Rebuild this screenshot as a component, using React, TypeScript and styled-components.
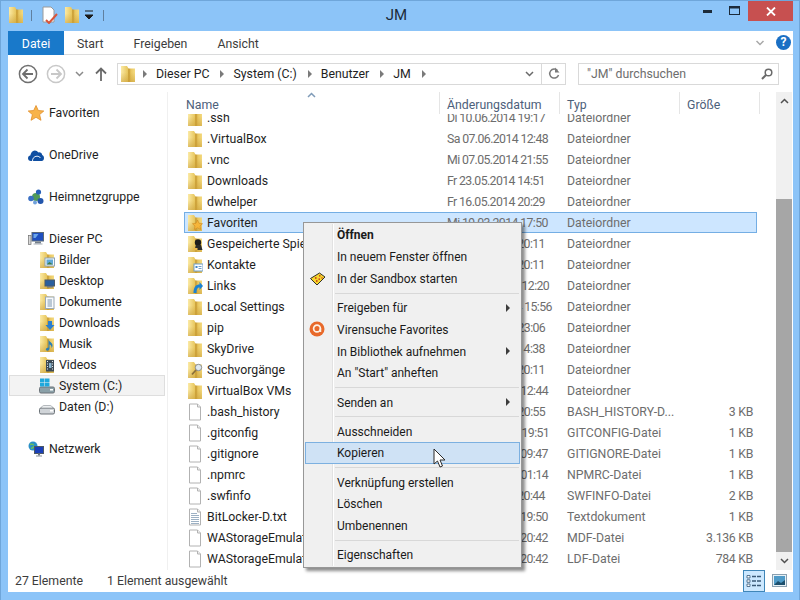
import styled, { createGlobalStyle } from "styled-components";

const GlobalStyle = createGlobalStyle`
    html, body {
        margin: 0;
        padding: 0;
        background: #8cc4f8;
    }
    * {
        box-sizing: border-box;
    }
`;

const Window = styled.div`
    position: relative;
    width: 800px;
    height: 600px;
    overflow: hidden;
    display: flex;
    flex-direction: column;
    padding: 0 6px 8px 7px;
    background: #8cc4f8;
    border: 1px solid #6fa6da;
    border-width: 1px 1px 0 1px;
    font-family: "Roboto", "Noto Sans", sans-serif;
    font-size: 12.3px;
    color: #1e1e1e;
`;

const TitleBar = styled.div`
    height: 30px;
    margin: 0 -6px 0 -7px;
    padding-left: 7px;
    display: flex;
    align-items: flex-start;
    position: relative;
`;

const QuickAccess = styled.div`
    display: flex;
    align-items: center;
    height: 28px;
`;

const QuickSep = styled.div<{ $left: number; $right: number }>`
    width: 1px;
    height: 11px;
    background: #5f7f9f;
    margin: 0 ${(p) => p.$right}px 0 ${(p) => p.$left}px;
`;

const QuickIcon = styled.div<{ $gap: number }>`
    display: flex;
    margin-right: ${(p) => p.$gap}px;
`;

const Title = styled.div`
    position: absolute;
    left: 0;
    right: 7px;
    top: 4px;
    text-align: center;
    font-size: 15px;
    line-height: 20px;
    color: #1c2b3a;
`;

const Controls = styled.div`
    margin-left: auto;
    display: flex;
    align-items: flex-start;
    margin-right: 6px;
`;

const ControlButton = styled.div<{ $close?: boolean; $w: number }>`
    width: ${(p) => p.$w}px;
    height: 20px;
    display: flex;
    align-items: center;
    justify-content: center;
    background: ${(p) => (p.$close ? "#c75050" : "transparent")};
`;

const Content = styled.div`
    flex: 1;
    min-height: 0;
    display: flex;
    flex-direction: column;
    background: #ffffff;
`;

const TabRow = styled.div`
    height: 24px;
    display: flex;
    align-items: stretch;
    border-bottom: 1px solid #dadbdc;
`;

const Tab = styled.div<{ $active?: boolean }>`
    padding: 2px 13px 0;
    width: ${(p) => (p.$active ? "56px" : "auto")};
    margin-right: ${(p) => (p.$active ? 0 : 4)}px;
    display: flex;
    align-items: center;
    justify-content: center;
    color: ${(p) => (p.$active ? "#ffffff" : "#3c3c3c")};
    background: ${(p) => (p.$active ? "#1979ca" : "transparent")};
    height: ${(p) => (p.$active ? 24 : 23)}px;
`;

const RibbonRight = styled.div`
    margin-left: auto;
    display: flex;
    align-items: center;
    gap: 11px;
    padding-right: 2px;
`;

const HelpBadge = styled.div`
    width: 15px;
    height: 15px;
    border-radius: 50%;
    background: #1a6fc4;
    color: #ffffff;
    font-size: 12px;
    font-weight: 700;
    line-height: 15px;
    text-align: center;
`;

const NavRow = styled.div`
    height: 37px;
    display: flex;
    align-items: center;
    padding-left: 10px;
`;

const NavButtons = styled.div`
    width: 99px;
    display: flex;
    align-items: center;
`;

const NavIcon = styled.div<{ $w: number }>`
    width: ${(p) => p.$w}px;
    display: flex;
    justify-content: center;
`;

const AddressBox = styled.div`
    width: 449px;
    height: 22px;
    border: 1px solid #d9d9d9;
    display: flex;
    align-items: center;
    padding-left: 2px;
`;

const Crumb = styled.span`
    color: #1e1e1e;
    margin: 0 11px 0 9px;
`;

const CrumbArrow = styled.span<{ $first?: boolean }>`
    width: 0;
    height: 0;
    border-left: 4px solid #7a7a7a;
    border-top: 4px solid transparent;
    border-bottom: 4px solid transparent;
    margin-left: ${(p) => (p.$first ? 7 : 0)}px;
`;

const AddressEnd = styled.div`
    margin-left: auto;
    display: flex;
    align-items: center;
    height: 100%;
`;

const AddressChevron = styled.div`
    width: 24px;
    display: flex;
    justify-content: center;
`;

const RefreshCell = styled.div`
    width: 24px;
    height: 100%;
    border-left: 1px solid #d9d9d9;
    display: flex;
    align-items: center;
    justify-content: center;
`;

const SearchBox = styled.div`
    width: 201px;
    height: 22px;
    margin-left: 12px;
    border: 1px solid #d9d9d9;
    display: flex;
    align-items: center;
    justify-content: space-between;
    padding: 0 5px 0 8px;
    color: #6d6d6d;
`;

const Body = styled.div`
    flex: 1;
    min-height: 0;
    display: flex;
`;

const NavPane = styled.div`
    width: 160px;
    padding: 10px 2px 0 1px;
    border-right: 1px solid #f0f0f0;
`;

const NavItem = styled.div<{ $sub?: boolean; $top?: boolean; $current?: boolean }>`
    height: 21px;
    margin-top: ${(p) => (p.$top ? 21 : 0)}px;
    padding-left: ${(p) => (p.$sub ? 30 : 19)}px;
    display: flex;
    align-items: center;
    gap: ${(p) => (p.$sub ? 4 : 5)}px;
    color: #1e1e1e;
    background: ${(p) => (p.$current ? "#f3f3f3" : "transparent")};
    box-shadow: ${(p) => (p.$current ? "inset 0 0 0 1px #dedede" : "none")};
`;

const ListPane = styled.div`
    flex: 1;
    min-width: 0;
    display: flex;
    flex-direction: column;
    padding-left: 16px;
`;

const HeaderRow = styled.div`
    height: 22px;
    display: grid;
    grid-template-columns: 256px 120px 120px 80px;
    position: relative;
`;

const HeaderCell = styled.div`
    padding: 5px 0 0 2px;
    line-height: 16px;
    color: #4c607a;
    border-right: 1px solid #e5e5e5;
    & + & {
        padding-left: 7px;
    }
`;

const SortMark = styled.div`
    position: absolute;
    left: 123px;
    top: 0;
    display: flex;
`;

const RowClip = styled.div`
    flex: 1;
    min-height: 0;
    overflow: hidden;
`;

const RowStack = styled.div`
    margin-top: -7px;
`;

const Row = styled.div<{ $selected?: boolean }>`
    height: 21px;
    width: 573px;
    display: grid;
    grid-template-columns: 256px 120px 114px 79px;
    align-items: center;
    background: ${(p) => (p.$selected ? "#cde6ff" : "transparent")};
    box-shadow: ${(p) => (p.$selected ? "inset 0 0 0 1px #74aee4" : "none")};
`;

const NameCell = styled.div`
    display: flex;
    align-items: center;
    gap: 4px;
    padding-left: 3px;
    white-space: nowrap;
    overflow: hidden;
`;

const MutedCell = styled.div`
    padding-left: 7px;
    color: #6d6d6d;
    white-space: nowrap;
    overflow: hidden;
`;

const DateCell = styled(MutedCell)`
    letter-spacing: -0.6px;
`;

const SizeCell = styled.div`
    text-align: right;
    color: #6d6d6d;
    letter-spacing: -0.3px;
`;

const ScrollTrack = styled.div`
    width: 16px;
    margin-right: 1px;
    margin-left: 19px;
    display: flex;
    flex-direction: column;
    background: #f0f0f0;
`;

const ScrollEnd = styled.div`
    height: 18px;
    display: flex;
    align-items: center;
    justify-content: center;
`;

const ScrollGap = styled.div`
    height: 89px;
`;

const ScrollThumb = styled.div`
    flex: 1;
    background: #a6a6a6;
`;

const StatusBar = styled.div`
    height: 22px;
    display: flex;
    align-items: center;
    padding: 0 0 1px 7px;
    color: #3c3c3c;
`;

const StatusCount = styled.div`
    width: 92px;
`;

const ViewSwitch = styled.div`
    margin-left: auto;
    margin-right: 3px;
    display: flex;
    align-items: center;
    gap: 3px;
`;

const ViewButton = styled.div<{ $active?: boolean }>`
    width: 22px;
    height: 22px;
    display: flex;
    align-items: center;
    justify-content: center;
    background: ${(p) => (p.$active ? "#cce8ff" : "transparent")};
    box-shadow: ${(p) => (p.$active ? "inset 0 0 0 1px #3f86b8" : "none")};
`;

const Menu = styled.div`
    position: absolute;
    left: 302px;
    top: 221px;
    width: 219px;
    padding: 1px;
    background: #f0f0f0;
    border: 1px solid #979797;
    box-shadow: 3px 3px 3px rgba(0, 0, 0, 0.45);
    font-size: 12px;
`;

const MenuRail = styled.div`
    position: absolute;
    left: 28px;
    top: 1px;
    bottom: 1px;
    width: 2px;
    background: #e2e2e2;
    border-right: 1px solid #ffffff;
`;

const MenuEntry = styled.div<{ $hot?: boolean; $bold?: boolean }>`
    position: relative;
    height: 21.8px;
    display: flex;
    align-items: center;
    padding: 1px 0 0 32px;
    font-weight: ${(p) => (p.$bold ? 700 : 400)};
    color: #1a1a1a;
    background: ${(p) => (p.$hot ? "#cfe2f5" : "transparent")};
    box-shadow: ${(p) => (p.$hot ? "inset 0 0 0 1px #7cb0e0" : "none")};
`;

const MenuIcon = styled.div`
    position: absolute;
    left: 4px;
    top: 3px;
    display: flex;
`;

const MenuArrow = styled.div`
    position: absolute;
    right: 10px;
    top: 7px;
    width: 0;
    height: 0;
    border-left: 4px solid #3c3c3c;
    border-top: 4px solid transparent;
    border-bottom: 4px solid transparent;
`;

const MenuSeparator = styled.div`
    height: 7.3px;
    display: flex;
    align-items: center;
    padding-left: 30px;
    padding-right: 1px;
    &::after {
        content: "";
        flex: 1;
        height: 1px;
        background: #d8d8d8;
    }
`;

const Pointer = styled.svg`
    position: absolute;
    left: 432px;
    top: 447px;
`;

type Overlay = "star" | "game" | "contact" | "link" | "search" | "picture" | "desktop" | "doc" | "down" | "music" | "video";

function OverlayMark({ kind }: { kind: Overlay }) {
    switch (kind) {
        case "star":
            return <polygon points="10.5,6 12,9.3 15.5,9.7 13,12 13.7,15.5 10.5,13.8 7.3,15.5 8,12 5.5,9.7 9,9.3" fill="#f5b53a" stroke="#d08a20" strokeWidth="0.6" />;
        case "game":
            return (
                <>
                    <circle cx="11" cy="7.5" r="3.2" fill="#1c1c1c" />
                    <path d="M9 10h5l1.5 5h-8z" fill="#2a2a2a" />
                    <rect x="6.5" y="13" width="4" height="2" fill="#e9b54a" />
                </>
            );
        case "contact":
            return (
                <>
                    <rect x="7" y="8" width="9" height="7" fill="#ffffff" stroke="#6f9fc8" />
                    <rect x="8.5" y="10" width="2" height="2" fill="#3f86c8" />
                    <path d="M11.5 10.5h3M11.5 12.5h3" stroke="#6f9fc8" />
                </>
            );
        case "link":
            return <path d="M6.5 16c0-6 2.5-8.5 6-8.5V5l3.5 4-3.5 4v-2.5c-2 0-3 1.5-3 5.5z" fill="#1b82d2" />;
        case "search":
            return (
                <>
                    <circle cx="11.5" cy="6.5" r="3.2" fill="#dfe8ee" stroke="#8a8f94" />
                    <path d="M9 9l-4 4.5" stroke="#8a6f3a" strokeWidth="1.8" />
                </>
            );
        case "picture":
            return (
                <>
                    <rect x="6" y="7" width="9.5" height="8" fill="#f4f8fb" stroke="#8ea3b5" />
                    <rect x="7.5" y="8.5" width="6.5" height="5" fill="#5fa8d8" />
                    <path d="M7.5 13.5l3-2.5 3.5 2.5z" fill="#3f7a4a" />
                </>
            );
        case "desktop":
            return (
                <>
                    <rect x="6" y="8" width="9.5" height="6" fill="#2a5f9e" stroke="#4b5a6a" />
                    <rect x="8" y="14" width="6" height="1.5" fill="#6a7480" />
                </>
            );
        case "doc":
            return (
                <>
                    <rect x="6.5" y="4" width="8.5" height="11.5" fill="#f8fafc" stroke="#9aa8b5" />
                    <path d="M8.5 7h4.5M8.5 9h4.5M8.5 11h4.5M8.5 13h4.5" stroke="#7d97b0" />
                </>
            );
        case "down":
            return <path d="M9 7h4v4h2.5L11 16l-4.5-5H9z" fill="#2a7fd0" />;
        case "music":
            return <path d="M9.5 4c0 3 4 3 4 6.5 0 1.2-.5 2-1 2.5.3-2-1.2-3.5-2-3.5v4c0 1.5-1.5 2.5-3 2-1.2-.5-.7-2.5 1-2.8l1-.2z" fill="#2a7fb8" />;
        case "video":
            return (
                <>
                    <rect x="7" y="4" width="8" height="11.5" fill="#3c4a55" />
                    <path d="M8 5.5h1M8 8h1M8 10.5h1M8 13h1M13 5.5h1M13 8h1M13 10.5h1M13 13h1" stroke="#e4e8ec" />
                    <rect x="10" y="7" width="2.5" height="5" fill="#8ab4d0" />
                </>
            );
    }
}

function FolderIcon({ overlay }: { overlay?: Overlay }) {
    return (
        <svg width="16" height="18" viewBox="0 0 16 18">
            <defs>
                <linearGradient id="folderFace" x1="0" x2="1" y1="0" y2="0">
                    <stop offset="0" stopColor="#fbeaa6" />
                    <stop offset="0.48" stopColor="#e8c75f" />
                    <stop offset="0.56" stopColor="#c4962e" />
                    <stop offset="0.7" stopColor="#e8c660" />
                    <stop offset="1" stopColor="#f4da80" />
                </linearGradient>
                <linearGradient id="folderShade" x1="0" x2="0" y1="0" y2="1">
                    <stop offset="0.4" stopColor="#c99d35" stopOpacity="0" />
                    <stop offset="1" stopColor="#c99d35" stopOpacity="0.55" />
                </linearGradient>
            </defs>
            <path d="M1 1h6l1.5 2.5H15v13.5H1z" fill="url(#folderFace)" />
            <path d="M1 1h6l1.5 2.5H15v13.500H1z" fill="url(#folderShade)" />
            {overlay && <OverlayMark kind={overlay} />}
        </svg>
    );
}

function FileIcon({ lines }: { lines?: boolean }) {
    return (
        <svg width="16" height="18" viewBox="0 0 16 18">
            <path d="M2.5 1h8l3 3v13h-11z" fill="#ffffff" stroke="#b2b2b2" />
            <path d="M10.5 1v3h3" fill="#f0f0f0" stroke="#b2b2b2" />
            {lines && <path d="M4 5.5h6M4 7.5h8M4 9.5h8M4 11.5h8M4 13.5h8M4 15.5h8" stroke="#9db1c4" />}
        </svg>
    );
}

function StarIcon() {
    return (
        <svg width="16" height="16" viewBox="0 0 16 16">
            <polygon points="8,0.5 10.3,5.5 15.8,6 11.6,9.6 13,15.3 8,12.3 3,15.3 4.4,9.6 0.2,6 5.7,5.5" fill="#f8b34a" stroke="#e08e2a" strokeWidth="0.8" />
        </svg>
    );
}

function CloudIcon() {
    return (
        <svg width="16" height="16" viewBox="0 0 16 16">
            <path d="M3 14c-2 0-3-1.300-3-2.800 0-1.500 1-2.600 2.300-2.700C2.800 6 4.300 3.500 6.800 3.500c1.600 0 2.800.8 3.500 2 2-.6 3.600.7 3.900 2.500 1 .3 1.800 1.500 1.800 2.900 0 1.700-1 3.100-2.300 3.100z" fill="#0f4ea1" />
            <path d="M4.500 14c0-2.500 1.500-4.800 4.500-4.800 1.500 0 2.800.7 3.500 1.800" fill="none" stroke="#ffffff" strokeWidth="0.9" />
        </svg>
    );
}

function HomegroupIcon() {
    return (
        <svg width="16" height="16" viewBox="0 0 16 16">
            <circle cx="8" cy="8" r="4" fill="#4f9a58" />
            <circle cx="10.5" cy="3" r="2.6" fill="#2660b8" />
            <circle cx="3" cy="9.5" r="2.8" fill="#3a70c4" />
            <circle cx="12.5" cy="12" r="3" fill="#2356ac" />
            <circle cx="7" cy="13.5" r="2" fill="#6fa0dc" />
        </svg>
    );
}

function ComputerIcon() {
    return (
        <svg width="16" height="16" viewBox="0 0 16 16">
            <rect x="0.5" y="4.5" width="2.5" height="9" fill="#d8d8d8" stroke="#6f6f6f" strokeWidth="0.7" />
            <rect x="4" y="1.5" width="11.5" height="8.5" fill="#1f4fc0" stroke="#5a6a78" />
            <path d="M5.5 3h5l-3 4h-2z" fill="#6ba6ea" />
            <rect x="7" y="10.5" width="6" height="2" fill="#76808a" />
            <rect x="5.5" y="12.5" width="9" height="1" fill="#a5adb5" />
        </svg>
    );
}

function DriveIcon({ system }: { system?: boolean }) {
    return (
        <svg width="16" height="16" viewBox="0 0 16 16">
            <rect x="0.5" y="9" width="15" height="6" rx="1.5" fill={system ? "#8aa0a8" : "#d0d4d8"} stroke="#6c7378" />
            <rect x="11" y="11" width="3" height="1.5" fill="#ffffff" />
            {system ? (
                <>
                    <rect x="1" y="0.5" width="4.5" height="4" fill="#1fa8dc" />
                    <rect x="6" y="0.5" width="4.5" height="4" fill="#1fa8dc" />
                    <rect x="1" y="5" width="4.5" height="3.5" fill="#1fa8dc" />
                    <rect x="6" y="5" width="4.5" height="3.5" fill="#1fa8dc" />
                </>
            ) : (
                <path d="M2 9c1-2 2-2.5 3-2.5h6c1 0 2 .5 3 2.5z" fill="#eceef0" stroke="#8a9096" strokeWidth="0.6" />
            )}
        </svg>
    );
}

function NetworkIcon() {
    return (
        <svg width="16" height="16" viewBox="0 0 16 16">
            <circle cx="5" cy="5" r="4.5" fill="#2a90c8" />
            <path d="M2 3.5c2-1 3 .5 4 0M3.5 8c0-2 3-1.5 3-3" fill="none" stroke="#6fbf5a" strokeWidth="1.4" />
            <rect x="6.5" y="5.5" width="9" height="7" fill="#1a3fb8" stroke="#4c5866" />
            <rect x="10" y="12.5" width="2" height="2" fill="#6a7480" />
            <rect x="8" y="14.5" width="6" height="1" fill="#8a929a" />
        </svg>
    );
}

function NavCircle({ muted, flip }: { muted?: boolean; flip?: boolean }) {
    const tone = muted ? "#c8c8c8" : "#6f6f6f";
    return (
        <svg width="20" height="20" viewBox="0 0 20 20" style={{ transform: flip ? "scaleX(-1)" : undefined }}>
            <circle cx="10" cy="10" r="8.6" fill="#ffffff" stroke={tone} strokeWidth="1.5" />
            <path d="M5 10h10M9.5 5.5L5 10l4.5 4.5" fill="none" stroke={tone} strokeWidth="1.8" />
        </svg>
    );
}

function TinyChevron({ up, color = "#7a7a7a", w = 9 }: { up?: boolean; color?: string; w?: number }) {
    return (
        <svg width={w} height="6" viewBox="0 0 9 6">
            <path d={up ? "M1 5l3.5-3.5L8 5" : "M1 1l3.5 3.5L8 1"} fill="none" stroke={color} strokeWidth="1.5" />
        </svg>
    );
}

function QuickDoc() {
    return (
        <svg width="16" height="18" viewBox="0 0 16 18">
            <path d="M1 1h8l3 3v12H1z" fill="#ffffff" stroke="#9a9a9a" />
            <path d="M4 14l3 3 8-9" fill="none" stroke="#d8553a" strokeWidth="2" />
        </svg>
    );
}

function SandboxIcon() {
    return (
        <svg width="18" height="16" viewBox="0 0 18 16">
            <path d="M1.5 7.500L10.500 2l5.500 4-8 8z" fill="#f7d62e" stroke="#1c1c1c" strokeWidth="0.9" />
            <path d="M6 7h1.500M10 4.800h1.500M9.500 8.200h1.500M12.500 7h1M7 10h1.500" stroke="#c02a1a" strokeWidth="1.300" />
        </svg>
    );
}

function AvastIcon() {
    return (
        <svg width="16" height="16" viewBox="0 0 16 16">
            <circle cx="8" cy="8" r="7.5" fill="#e8692a" />
            <circle cx="8" cy="7.5" r="3.4" fill="#e8692a" stroke="#fdf2e6" strokeWidth="1.700" />
            <path d="M11.400 7.500v3.500" stroke="#fdf2e6" strokeWidth="1.700" />
        </svg>
    );
}

type FileRow = { name: string; date: string; type: string; size?: string; icon: "folder" | "file" | "text"; overlay?: Overlay; selected?: boolean };

const rows: FileRow[] = [
    { name: ".ssh", date: "Di 10.06.2014 19:17", type: "Dateiordner", icon: "folder" },
    { name: ".VirtualBox", date: "Sa 07.06.2014 12:48", type: "Dateiordner", icon: "folder" },
    { name: ".vnc", date: "Mi 07.05.2014 21:55", type: "Dateiordner", icon: "folder" },
    { name: "Downloads", date: "Fr 23.05.2014 14:51", type: "Dateiordner", icon: "folder" },
    { name: "dwhelper", date: "Fr 16.05.2014 20:29", type: "Dateiordner", icon: "folder" },
    { name: "Favoriten", date: "Mi 19.03.2014 17:50", type: "Dateiordner", icon: "folder", overlay: "star", selected: true },
    { name: "Gespeicherte Spiele", date: "Fr 21.03.2014 20:11", type: "Dateiordner", icon: "folder", overlay: "game" },
    { name: "Kontakte", date: "Fr 21.03.2014 20:11", type: "Dateiordner", icon: "folder", overlay: "contact" },
    { name: "Links", date: "Do 05.06.2014 12:20", type: "Dateiordner", icon: "folder", overlay: "link" },
    { name: "Local Settings", date: "Mo 09.06.2014 15:56", type: "Dateiordner", icon: "folder" },
    { name: "pip", date: "Di 20.05.2014 23:06", type: "Dateiordner", icon: "folder" },
    { name: "SkyDrive", date: "Fr 04.04.2014 14:38", type: "Dateiordner", icon: "folder" },
    { name: "Suchvorgänge", date: "Fr 21.03.2014 20:11", type: "Dateiordner", icon: "folder", overlay: "search" },
    { name: "VirtualBox VMs", date: "Sa 07.06.2014 12:44", type: "Dateiordner", icon: "folder" },
    { name: ".bash_history", date: "Di 10.06.2014 20:55", type: "BASH_HISTORY-D...", size: "3 KB", icon: "file" },
    { name: ".gitconfig", date: "Do 22.05.2014 19:51", type: "GITCONFIG-Datei", size: "1 KB", icon: "file" },
    { name: ".gitignore", date: "Mi 21.05.2014 09:47", type: "GITIGNORE-Datei", size: "1 KB", icon: "file" },
    { name: ".npmrc", date: "Sa 17.05.2014 01:14", type: "NPMRC-Datei", size: "1 KB", icon: "file" },
    { name: ".swfinfo", date: "Fr 16.05.2014 20:44", type: "SWFINFO-Datei", size: "2 KB", icon: "file" },
    { name: "BitLocker-D.txt", date: "Mi 19.03.2014 19:50", type: "Textdokument", size: "1 KB", icon: "text" },
    { name: "WAStorageEmulatorDb34.mdf", date: "Mi 14.05.2014 20:42", type: "MDF-Datei", size: "3.136 KB", icon: "file" },
    { name: "WAStorageEmulatorDb34_log.ldf", date: "Mi 14.05.2014 20:42", type: "LDF-Datei", size: "784 KB", icon: "file" },
];

const libraries: { label: string; overlay: Overlay }[] = [
    { label: "Bilder", overlay: "picture" },
    { label: "Desktop", overlay: "desktop" },
    { label: "Dokumente", overlay: "doc" },
    { label: "Downloads", overlay: "down" },
    { label: "Musik", overlay: "music" },
    { label: "Videos", overlay: "video" },
];

type MenuLine =
    | { sep: true }
    | { sep?: false; label: string; bold?: boolean; arrow?: boolean; hot?: boolean; icon?: "sandbox" | "avast" };

const menuLines: MenuLine[] = [
    { label: "Öffnen", bold: true },
    { label: "In neuem Fenster öffnen" },
    { label: "In der Sandbox starten", icon: "sandbox" },
    { sep: true },
    { label: "Freigeben für", arrow: true },
    { label: "Virensuche Favorites", icon: "avast" },
    { label: "In Bibliothek aufnehmen", arrow: true },
    { label: 'An "Start" anheften' },
    { sep: true },
    { label: "Senden an", arrow: true },
    { sep: true },
    { label: "Ausschneiden" },
    { label: "Kopieren", hot: true },
    { sep: true },
    { label: "Verknüpfung erstellen" },
    { label: "Löschen" },
    { label: "Umbenennen" },
    { sep: true },
    { label: "Eigenschaften" },
];

function App() {
    return (
        <Window>
            <GlobalStyle />
            <TitleBar>
                <QuickAccess>
                    <FolderIcon />
                    <QuickSep $left={7} $right={10} />
                    <QuickIcon $gap={6}>
                        <QuickDoc />
                    </QuickIcon>
                    <QuickIcon $gap={3}>
                        <FolderIcon />
                    </QuickIcon>
                    <svg width="12" height="10" viewBox="0 0 12 10">
                        <path d="M2 1h8M2 5h8l-4 4z" fill="#1c1c1c" stroke="#1c1c1c" strokeWidth="1" />
                    </svg>
                    <QuickSep $left={8} $right={0} />
                </QuickAccess>
                <Title>JM</Title>
                <Controls>
                    <ControlButton $w={28}>
                        <svg width="10" height="4" viewBox="0 0 10 4">
                            <rect y="1" width="9" height="3" fill="#1c2b3a" />
                        </svg>
                    </ControlButton>
                    <ControlButton $w={26}>
                        <svg width="12" height="10" viewBox="0 0 12 10">
                            <rect x="0.5" y="0.5" width="10" height="8" fill="none" stroke="#1c2b3a" />
                            <rect x="0.5" y="0.5" width="10" height="2" fill="#1c2b3a" />
                        </svg>
                    </ControlButton>
                    <ControlButton $close $w={45}>
                        <svg width="10" height="9" viewBox="0 0 10 9">
                            <path d="M1 0.5l8 8M9 0.5l-8 8" stroke="#ffffff" strokeWidth="1.8" />
                        </svg>
                    </ControlButton>
                </Controls>
            </TitleBar>
            <Content>
                <TabRow>
                    <Tab $active>Datei</Tab>
                    <Tab>Start</Tab>
                    <Tab>Freigeben</Tab>
                    <Tab>Ansicht</Tab>
                    <RibbonRight>
                        <TinyChevron color="#a8a8a8" w={10} />
                        <HelpBadge>?</HelpBadge>
                    </RibbonRight>
                </TabRow>
                <NavRow>
                    <NavButtons>
                        <NavIcon $w={20}>
                            <NavCircle />
                        </NavIcon>
                        <NavIcon $w={38}>
                            <NavCircle muted flip />
                        </NavIcon>
                        <NavIcon $w={10}>
                            <TinyChevron color="#8a8a8a" />
                        </NavIcon>
                        <NavIcon $w={34}>
                            <svg width="12" height="14" viewBox="0 0 12 14">
                                <path d="M6 14V2M1 6.5L6 1.5l5 5" fill="none" stroke="#6a6a6a" strokeWidth="1.8" />
                            </svg>
                        </NavIcon>
                    </NavButtons>
                    <AddressBox>
                        <FolderIcon />
                        <CrumbArrow $first />
                        <Crumb>Dieser PC</Crumb>
                        <CrumbArrow />
                        <Crumb>System (C:)</Crumb>
                        <CrumbArrow />
                        <Crumb>Benutzer</Crumb>
                        <CrumbArrow />
                        <Crumb>JM</Crumb>
                        <CrumbArrow />
                        <AddressEnd>
                            <AddressChevron>
                                <TinyChevron color="#6a6a6a" />
                            </AddressChevron>
                            <RefreshCell>
                                <svg width="12" height="13" viewBox="0 0 12 13">
                                    <path d="M9.5 3.5a4.5 4.5 0 1 0 1 4.500" fill="none" stroke="#7a7a7a" strokeWidth="1.5" />
                                    <path d="M7 0.5v5h4.5z" fill="#7a7a7a" />
                                </svg>
                            </RefreshCell>
                        </AddressEnd>
                    </AddressBox>
                    <SearchBox>
                        <span>"JM" durchsuchen</span>
                        <svg width="12" height="12" viewBox="0 0 12 12">
                            <circle cx="7.5" cy="4.5" r="3.3" fill="none" stroke="#6a6a6a" strokeWidth="1.5" />
                            <path d="M5 7L1 11" stroke="#6a6a6a" strokeWidth="2" />
                        </svg>
                    </SearchBox>
                </NavRow>
                <Body>
                    <NavPane>
                        <NavItem>
                            <StarIcon />
                            Favoriten
                        </NavItem>
                        <NavItem $top>
                            <CloudIcon />
                            OneDrive
                        </NavItem>
                        <NavItem $top>
                            <HomegroupIcon />
                            Heimnetzgruppe
                        </NavItem>
                        <NavItem $top>
                            <ComputerIcon />
                            Dieser PC
                        </NavItem>
                        {libraries.map((lib) => (
                            <NavItem $sub key={lib.label}>
                                <FolderIcon overlay={lib.overlay} />
                                {lib.label}
                            </NavItem>
                        ))}
                        <NavItem $sub $current>
                            <DriveIcon system />
                            System (C:)
                        </NavItem>
                        <NavItem $sub>
                            <DriveIcon />
                            Daten (D:)
                        </NavItem>
                        <NavItem $top>
                            <NetworkIcon />
                            Netzwerk
                        </NavItem>
                    </NavPane>
                    <ListPane>
                        <HeaderRow>
                            <HeaderCell>Name</HeaderCell>
                            <HeaderCell>Änderungsdatum</HeaderCell>
                            <HeaderCell>Typ</HeaderCell>
                            <HeaderCell>Größe</HeaderCell>
                            <SortMark>
                                <TinyChevron up color="#7f9bb8" />
                            </SortMark>
                        </HeaderRow>
                        <RowClip>
                            <RowStack>
                                {rows.map((row) => (
                                    <Row $selected={row.selected} key={row.name}>
                                        <NameCell>
                                            {row.icon === "folder" ? <FolderIcon overlay={row.overlay} /> : <FileIcon lines={row.icon === "text"} />}
                                            {row.name}
                                        </NameCell>
                                        <DateCell>{row.date}</DateCell>
                                        <MutedCell>{row.type}</MutedCell>
                                        <SizeCell>{row.size}</SizeCell>
                                    </Row>
                                ))}
                            </RowStack>
                        </RowClip>
                    </ListPane>
                    <ScrollTrack>
                        <ScrollEnd>
                            <TinyChevron up color="#505050" />
                        </ScrollEnd>
                        <ScrollGap />
                        <ScrollThumb />
                        <ScrollEnd>
                            <TinyChevron color="#505050" />
                        </ScrollEnd>
                    </ScrollTrack>
                </Body>
                <StatusBar>
                    <StatusCount>27 Elemente</StatusCount>
                    1 Element ausgewählt
                    <ViewSwitch>
                        <ViewButton $active>
                            <svg width="16" height="14" viewBox="0 0 16 14">
                                <path d="M1 1.5h3v2.5H1zM1 5.8h3v2.5H1zM1 10h3v2.5H1z" fill="#ffffff" stroke="#3a5a78" strokeWidth="0.8" />
                                <path d="M6 2.5h9M6 7h9M6 11.5h9" stroke="#3a5a78" strokeWidth="1.3" strokeDasharray="4 1" />
                            </svg>
                        </ViewButton>
                        <ViewButton>
                            <svg width="15" height="13" viewBox="0 0 15 13">
                                <rect x="0.5" y="0.5" width="14" height="12" fill="#e8f1f6" stroke="#8aa0b0" />
                                <rect x="2" y="2" width="11" height="9" fill="#4f9bc8" />
                                <path d="M2 11l4-4 3 2 4-3v5z" fill="#1d4f6d" />
                            </svg>
                        </ViewButton>
                    </ViewSwitch>
                </StatusBar>
            </Content>
            <Menu>
                <MenuRail />
                {menuLines.map((line, i) =>
                    line.sep ? (
                        <MenuSeparator key={i} />
                    ) : (
                        <MenuEntry $bold={line.bold} $hot={line.hot} key={i}>
                            {line.icon && <MenuIcon>{line.icon === "sandbox" ? <SandboxIcon /> : <AvastIcon />}</MenuIcon>}
                            {line.label}
                            {line.arrow && <MenuArrow />}
                        </MenuEntry>
                    ),
                )}
            </Menu>
            <Pointer width="14" height="21" viewBox="0 0 14 21">
                <path d="M1 1v15l3.5-3 2.5 6 2.5-1-2.5-6h5z" fill="#ffffff" stroke="#2a2a2a" strokeWidth="1" />
            </Pointer>
        </Window>
    );
}

export default App;
